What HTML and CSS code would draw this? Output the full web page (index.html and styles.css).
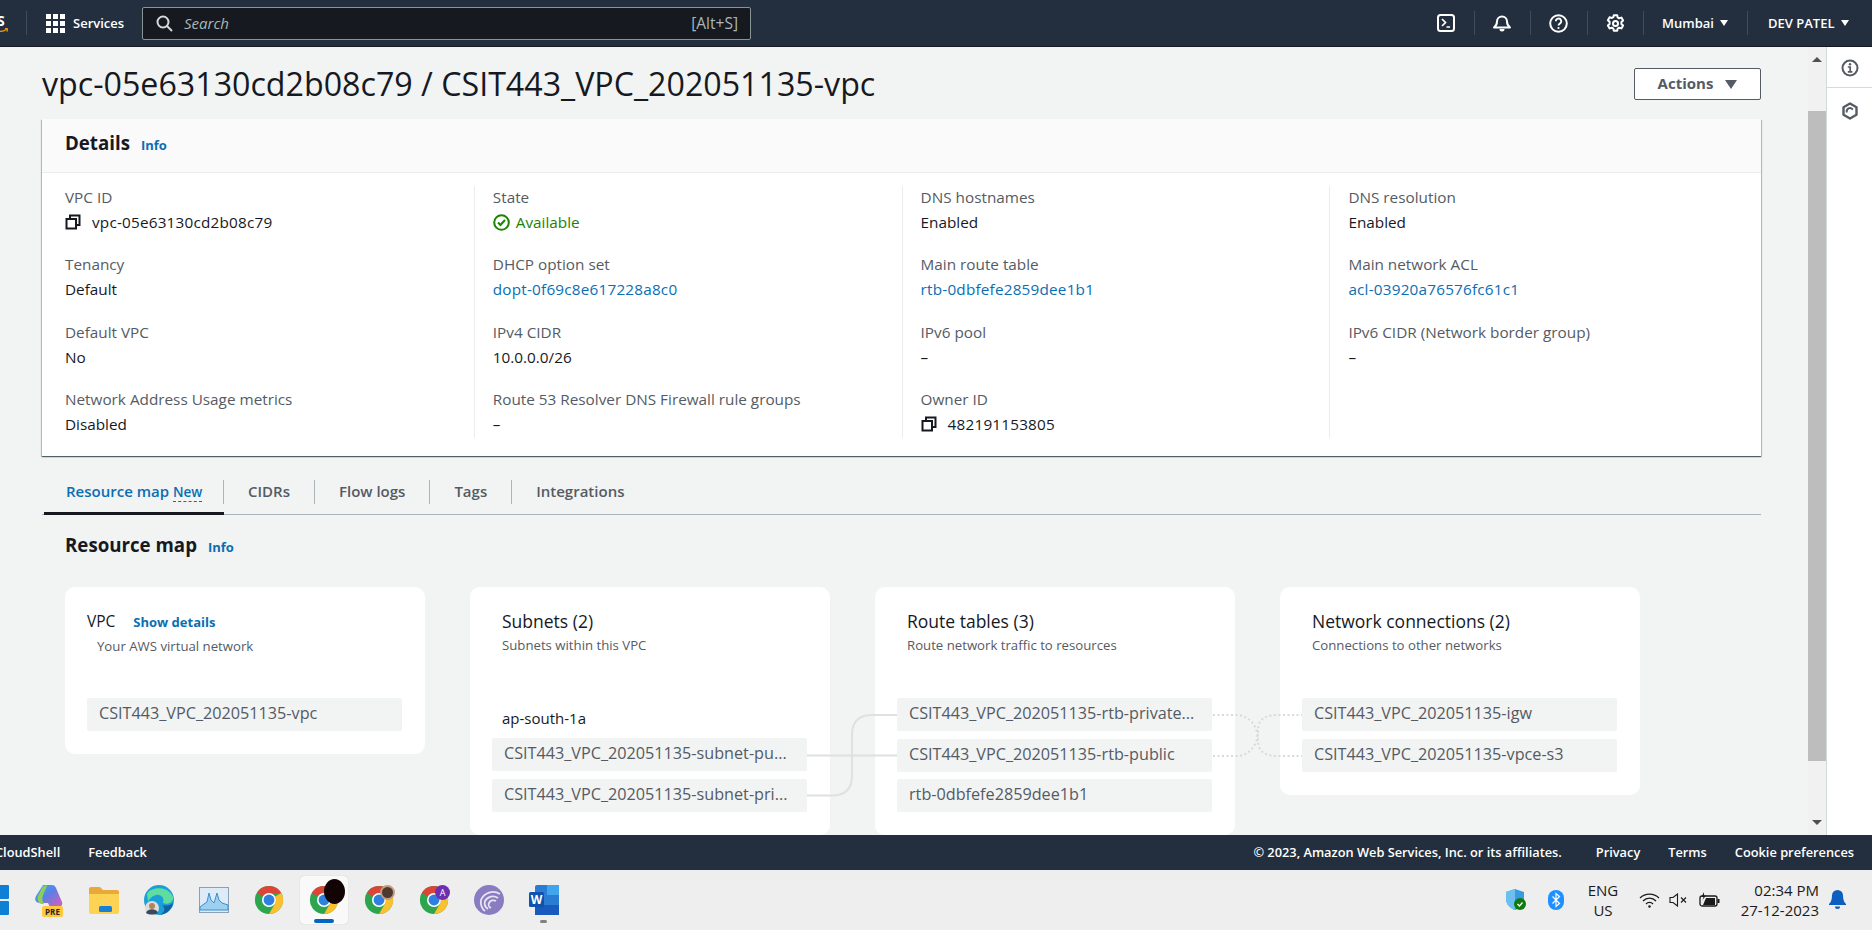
FILE: index.html
```html
<!DOCTYPE html>
<html lang="en">
<head>
  <meta charset="UTF-8">
  <title>VPC resource map</title>
  <link rel="stylesheet" href="styles.css">
</head>
<body>
  <svg class="defs" width="0" height="0">
    <symbol id="copy" viewBox="0 0 16 16">
      <path d="M1.5 5h9.5v9.5H1.5z" fill="none" stroke="#16191f" stroke-width="2"/>
      <path d="M5 4.5V1.5h9.5V11H11.5" fill="none" stroke="#16191f" stroke-width="2"/>
    </symbol>
    <symbol id="chrome" viewBox="0 0 32 32">
      <circle cx="16" cy="16" r="15" fill="#2da44e"/>
      <path d="M16 1a15 15 0 0 1 13 7.5H16a7.5 7.5 0 0 0-6.5 3.750L3 8.500A15 15 0 0 1 16 1z" fill="#db4437"/>
      <path d="M29 8.500A15 15 0 0 1 16 31l6.500-11.250A7.500 7.500 0 0 0 22.500 12.250z" fill="#fbc02d"/>
      <circle cx="16" cy="16" r="7.500" fill="#fff"/>
      <circle cx="16" cy="16" r="5.800" fill="#2f7fe0"/>
    </symbol>
  </svg>

  <header class="topbar">
    <div class="logo-crop">
      <span class="logo-s">S</span>
      <svg class="logo-smile" width="8" height="6" viewBox="0 0 8 6"><path d="M-6 1c4 3 9 3 13 0M5 .5l2.500.2-.5 3" fill="none" stroke="#f90" stroke-width="1.200"/></svg>
    </div>
    <span class="bar-sep logo-sep"></span>
    <svg class="grid-icon" width="19" height="19" viewBox="0 0 19 19" fill="#fff">
      <rect width="5" height="5"/><rect x="7" width="5" height="5"/><rect x="14" width="5" height="5"/>
      <rect y="7" width="5" height="5"/><rect x="7" y="7" width="5" height="5"/><rect x="14" y="7" width="5" height="5"/>
      <rect y="14" width="5" height="5"/><rect x="7" y="14" width="5" height="5"/><rect x="14" y="14" width="5" height="5"/>
    </svg>
    <span class="services">Services</span>
    <div class="search">
      <svg width="17" height="17" viewBox="0 0 17 17"><circle cx="7" cy="7" r="5.500" fill="none" stroke="#d5dbdb" stroke-width="2"/><path d="M11 11l5 5" stroke="#d5dbdb" stroke-width="2"/></svg>
      <span class="search-text">Search</span>
      <span class="search-key">[Alt+S]</span>
    </div>
    <div class="bar-right">
      <div class="bar-icon">
        <svg width="18" height="18" viewBox="0 0 18 18" fill="none" stroke="#fff" stroke-width="2"><rect x="1" y="1" width="16" height="16" rx="2.500"/><path d="M5 5l3.500 3.500L5 12M9.500 13H13" stroke-width="1.700"/></svg>
      </div>
      <span class="bar-sep"></span>
      <div class="bar-icon">
        <svg width="20" height="20" viewBox="0 0 20 20" fill="none" stroke="#fff" stroke-width="2"><path d="M2 14.500c2-1.500 3-3 3-6a5 5 0 0 1 10 0c0 3 1 4.500 3 6z" stroke-linejoin="round"/><path d="M7.500 16a2.500 2.500 0 0 0 5 0z" fill="#fff" stroke="none"/></svg>
      </div>
      <span class="bar-sep"></span>
      <div class="bar-icon">
        <svg width="19" height="19" viewBox="0 0 19 19" fill="none" stroke="#fff" stroke-width="2"><circle cx="9.500" cy="9.500" r="8.300"/><path d="M6.800 7.300a2.700 2.700 0 1 1 4 2.300c-.9.500-1.300 1-1.300 2" stroke-width="1.800"/><circle cx="9.500" cy="14" r="1.100" fill="#fff" stroke="none"/></svg>
      </div>
      <span class="bar-sep"></span>
      <div class="bar-icon">
        <svg width="19" height="19" viewBox="0 0 19 19" fill="none" stroke="#fff" stroke-width="2"><path d="M7.800 1.200h3.400l.5 2.300 1.400.8 2.300-.7 1.700 2.900-1.700 1.600v1.800l1.700 1.600-1.700 2.900-2.300-.7-1.400.8-.5 2.300H7.800l-.5-2.300-1.400-.8-2.300.7-1.700-2.900 1.700-1.600V7.800L1.900 6.200l1.700-2.900 2.300.7 1.400-.8z" stroke-linejoin="round"/><circle cx="9.500" cy="9.500" r="2.500"/></svg>
      </div>
      <span class="bar-sep"></span>
      <div class="bar-menu region">Mumbai<i class="caret"></i></div>
      <span class="bar-sep"></span>
      <div class="bar-menu user">DEV PATEL<i class="caret"></i></div>
    </div>
  </header>

  <div class="main">
    <main class="content">
      <div class="page-head">
        <h1>vpc-05e63130cd2b08c79 / CSIT443_VPC_202051135-vpc</h1>
        <button class="actions">Actions<i class="caret-lg"></i></button>
      </div>

      <section class="details">
        <div class="details-head"><h2>Details</h2><a class="info">Info</a></div>
        <div class="details-grid">
          <div class="col">
            <div class="field"><label>VPC ID</label><p class="id"><svg class="copy"><use href="#copy"/></svg>vpc-05e63130cd2b08c79</p></div>
            <div class="field"><label>Tenancy</label><p>Default</p></div>
            <div class="field"><label>Default VPC</label><p>No</p></div>
            <div class="field"><label>Network Address Usage metrics</label><p>Disabled</p></div>
          </div>
          <div class="col">
            <div class="field"><label>State</label><p class="ok"><svg class="check" width="17" height="17" viewBox="0 0 17 17" fill="none" stroke="#1d8102" stroke-width="2"><circle cx="8.500" cy="8.500" r="7.300"/><path d="M5 8.500l2.500 2.500L12 6"/></svg>Available</p></div>
            <div class="field"><label>DHCP option set</label><p class="id"><a>dopt-0f69c8e617228a8c0</a></p></div>
            <div class="field"><label>IPv4 CIDR</label><p>10.0.0.0/26</p></div>
            <div class="field"><label>Route 53 Resolver DNS Firewall rule groups</label><p>–</p></div>
          </div>
          <div class="col">
            <div class="field"><label>DNS hostnames</label><p>Enabled</p></div>
            <div class="field"><label>Main route table</label><p class="id"><a>rtb-0dbfefe2859dee1b1</a></p></div>
            <div class="field"><label>IPv6 pool</label><p>–</p></div>
            <div class="field"><label>Owner ID</label><p class="id"><svg class="copy"><use href="#copy"/></svg>482191153805</p></div>
          </div>
          <div class="col">
            <div class="field"><label>DNS resolution</label><p>Enabled</p></div>
            <div class="field"><label>Main network ACL</label><p class="id"><a>acl-03920a76576fc61c1</a></p></div>
            <div class="field"><label>IPv6 CIDR (Network border group)</label><p>–</p></div>
          </div>
        </div>
      </section>

      <nav class="tabs">
        <div class="tab active">Resource map <span class="new">New</span></div>
        <div class="tab">CIDRs</div>
        <span class="tab-sep"></span>
        <div class="tab">Flow logs</div>
        <span class="tab-sep"></span>
        <div class="tab">Tags</div>
        <span class="tab-sep"></span>
        <div class="tab">Integrations</div>
      </nav>

      <div class="map-title"><h2>Resource map</h2><a class="info">Info</a></div>

      <div class="map">
        <div class="map-card">
          <div class="map-head">
            <div class="map-name">VPC <a class="show">Show details</a></div>
            <div class="map-sub">Your AWS virtual network</div>
          </div>
          <div class="items"><div class="item">CSIT443_VPC_202051135-vpc</div></div>
        </div>

        <div class="map-card">
          <div class="map-head">
            <div class="map-name">Subnets (2)</div>
            <div class="map-sub">Subnets within this VPC</div>
          </div>
          <div class="zone">ap-south-1a</div>
          <div class="items">
            <div class="item">CSIT443_VPC_202051135-subnet-pu...</div>
            <div class="item">CSIT443_VPC_202051135-subnet-pri...</div>
          </div>
        </div>

        <div class="map-card">
          <div class="map-head">
            <div class="map-name">Route tables (3)</div>
            <div class="map-sub">Route network traffic to resources</div>
          </div>
          <div class="items">
            <div class="item">CSIT443_VPC_202051135-rtb-private...</div>
            <div class="item">CSIT443_VPC_202051135-rtb-public</div>
            <div class="item">rtb-0dbfefe2859dee1b1</div>
          </div>
        </div>

        <div class="map-card">
          <div class="map-head">
            <div class="map-name">Network connections (2)</div>
            <div class="map-sub">Connections to other networks</div>
          </div>
          <div class="items">
            <div class="item">CSIT443_VPC_202051135-igw</div>
            <div class="item">CSIT443_VPC_202051135-vpce-s3</div>
          </div>
        </div>

        <!-- map origin is x=42 y=587 -->
        <svg class="links" width="1300" height="250" viewBox="42 587 1300 250" fill="none">
          <g stroke="#dde1e2" stroke-width="2">
            <path d="M807 755.500H897"/>
            <path d="M807 795.500H832q20 0 20-20V735q0-20 20-20H897"/>
          </g>
          <g stroke="#d5dbdb" stroke-width="2" stroke-dasharray="2 2.500">
            <path d="M1213 715H1236c14 0 22 12 22 25s8 16 22 16H1302"/>
            <path d="M1213 756H1236c14 0 22-12 22-25s8-16 22-16H1302"/>
          </g>
        </svg>
      </div>
    </main>

    <div class="scrollbar">
      <i class="arrow-up"></i>
      <div class="thumb"></div>
      <i class="arrow-down"></i>
    </div>

    <aside class="side">
      <div class="side-btn first">
        <svg width="18" height="18" viewBox="0 0 18 18" fill="none" stroke="#545b64" stroke-width="2"><circle cx="9" cy="9" r="7.500"/><path d="M6.800 8h2.400v4.500M6.800 12.800h4.600" stroke-width="1.700"/><circle cx="9" cy="5.200" r="1.200" fill="#545b64" stroke="none"/></svg>
      </div>
      <div class="side-btn">
        <svg width="18" height="18" viewBox="0 0 18 18" fill="none" stroke="#545b64" stroke-width="2.400"><path d="M9 1.500l6.500 3.700v7.600L9 16.500l-6.500-3.700V5.200z" stroke-linejoin="round"/><path d="M5.800 10.500A3.500 3.500 0 0 1 9.500 6l2.500 1.500" stroke-width="2"/></svg>
      </div>
    </aside>
  </div>

  <footer class="footer">
    <div class="foot-left"><span>CloudShell</span><span>Feedback</span></div>
    <div class="foot-right">
      <span class="copyright">© 2023, Amazon Web Services, Inc. or its affiliates.</span>
      <span>Privacy</span><span>Terms</span><span>Cookie preferences</span>
    </div>
  </footer>

  <div class="taskbar">
    <div class="apps">
      <div class="app start">
        <svg width="30" height="30" viewBox="0 0 30 30" fill="#0f7fd6"><rect width="14" height="14" rx="1"/><rect x="16" width="14" height="14" rx="1"/><rect y="16" width="14" height="14" rx="1"/><rect x="16" y="16" width="14" height="14" rx="1"/></svg>
      </div>
      <div class="app">
        <svg width="30" height="34" viewBox="0 0 30 34">
          <defs><linearGradient id="cp" x1="0" y1="0" x2="1" y2="1"><stop offset="0" stop-color="#31b6e8"/><stop offset=".45" stop-color="#5a7fe8"/><stop offset="1" stop-color="#e25bb5"/></linearGradient></defs>
          <path d="M9 2h9c2 0 3 1 4 3l6 14c1 3-1 5-4 5h-8l-2-4H6C2 20 0 17 2 13z" fill="url(#cp)"/>
          <path d="M4 13l4-8c1-2 3-3 5-2l-4 9c-1 3-1 6 1 9H7c-3-1-4-5-3-8z" fill="#8fce5a"/>
          <rect x="8" y="23" width="21" height="11" rx="2" fill="#ffc83d"/>
          <text x="18.500" y="32" class="pre">PRE</text>
        </svg>
      </div>
      <div class="app">
        <svg width="30" height="28" viewBox="0 0 30 28"><path d="M0 3a2 2 0 0 1 2-2h9l3 3h14a2 2 0 0 1 2 2v2H0z" fill="#e8a93a"/><path d="M0 8h30v18a2 2 0 0 1-2 2H2a2 2 0 0 1-2-2z" fill="#fcd353"/><rect x="10" y="20" width="13" height="6" rx="1.500" fill="#1b80d4"/></svg>
      </div>
      <div class="app">
        <svg width="30" height="30" viewBox="0 0 30 30">
          <circle cx="15" cy="15" r="15" fill="#1a9fd8"/>
          <path d="M3 9C6 2 24 0 29 12c1 6-6 8-10 6 2-5-2-9-7-8-4 1-7 4-8 7z" fill="#5fdca0"/>
          <path d="M29 18c-1 7-8 12-14 12 2 0 9-5 3-10 3 1 8 1 11-2z" fill="#12619e"/>
          <circle cx="8" cy="23" r="7" fill="#ddd"/>
          <circle cx="8" cy="21" r="3" fill="#b5835a"/>
          <path d="M2 28c1-5 11-5 12 0-3 2-9 2-12 0z" fill="#3a4a5e"/>
        </svg>
      </div>
      <div class="app">
        <svg width="30" height="26" viewBox="0 0 30 26"><rect x=".5" y=".5" width="29" height="25" fill="#dcebf7" stroke="#8aa0b4"/><path d="M1 23V20l4-3 3-2 2-9 2 7 3 3 3-10 2 7 3 3 6 2v5z" fill="#9ccff0" stroke="#3a8fd0"/></svg>
      </div>
      <div class="app"><svg width="30" height="30"><use href="#chrome"/></svg></div>
      <div class="app active-app">
        <svg width="30" height="30"><use href="#chrome"/></svg>
        <i class="blot"></i>
        <i class="run-bar"></i>
      </div>
      <div class="app">
        <svg width="30" height="30"><use href="#chrome"/></svg>
        <i class="face"></i>
      </div>
      <div class="app">
        <svg width="30" height="30"><use href="#chrome"/></svg>
        <i class="badge-a">A</i>
      </div>
      <div class="app">
        <svg width="30" height="30" viewBox="0 0 30 30" fill="none"><circle cx="15" cy="15" r="15" fill="#8a7cc0"/><path d="M26 9a13 13 0 0 0-19 6c-1 4 1 9 4 11M24 13a9 9 0 0 0-13 3c-1 3 0 6 3 8M22 16a5 5 0 0 0-7 2c-1 2 0 4 2 5" stroke="#e8e4f4" stroke-width="1.800"/></svg>
      </div>
      <div class="app">
        <svg width="30" height="32" viewBox="0 0 30 32"><rect x="6" y="1" width="24" height="30" rx="2" fill="#2b7cd3"/><rect x="18" y="1" width="12" height="10" fill="#41a5ee"/><rect x="6" y="21" width="24" height="10" fill="#185abd"/><rect y="8" width="15" height="15" rx="1.500" fill="#1152ad"/><text x="7.500" y="20" class="word">W</text></svg>
        <i class="run-dot"></i>
      </div>
    </div>

    <div class="tray">
      <svg class="tray-shield" width="20" height="22" viewBox="0 0 20 22"><path d="M9 0l9 3v7c0 5-4 9-9 11-5-2-9-6-9-11V3z" fill="#3b9be0"/><path d="M0 3l9-3v21c-5-2-9-6-9-11z" fill="#6cc0f0"/><circle cx="14" cy="15" r="6" fill="#0f7b0f"/><path d="M11.500 15l2 2 3-3.500" fill="none" stroke="#fff" stroke-width="1.300"/></svg>
      <svg class="tray-bt" width="16" height="20" viewBox="0 0 16 20"><rect width="16" height="20" rx="8" fill="#1e90ff"/><path d="M4.500 6.500l7 7L8 16.500V3.500l3.500 3-7 7" fill="none" stroke="#fff" stroke-width="1.200"/></svg>
      <div class="lang">ENG<br>US</div>
      <svg class="tray-wifi" width="21" height="15" viewBox="0 0 21 15" fill="none" stroke="#1a1a1a" stroke-width="1.200"><path d="M1 5a13.500 13.500 0 0 1 19 0M4 8a9 9 0 0 1 13 0M7 11a4.500 4.500 0 0 1 7 0"/><circle cx="10.500" cy="13.500" r="1.200" fill="#1a1a1a" stroke="none"/></svg>
      <svg class="tray-sound" width="20" height="14" viewBox="0 0 20 14" fill="none" stroke="#1a1a1a" stroke-width="1.100"><path d="M1 4.500h3L8.500 1v12L4 9.500H1z"/><path d="M12 4.500l5 5M17 4.500l-5 5"/></svg>
      <svg class="tray-batt" width="21" height="16" viewBox="0 0 21 16" fill="#1a1a1a"><rect x="1" y="4" width="17" height="10" rx="2" fill="none" stroke="#1a1a1a" stroke-width="1.300"/><path d="M4 13l3-7h9v7z"/><rect x="18.500" y="7" width="2" height="4"/><path d="M5 0L2.500 5h2L3.500 8 7 3.500H5z"/></svg>
      <div class="clock">02:34 PM<br>27-12-2023</div>
      <svg class="tray-bell" width="17" height="20" viewBox="0 0 17 20" fill="#0c5fc0"><path d="M8.500 0a5.500 5.500 0 0 1 5.500 5.500c0 4 1 6.500 3 8.500v1H0v-1c2-2 3-4.500 3-8.500A5.500 5.500 0 0 1 8.500 0z"/><path d="M6 16.500h5a2.500 2.500 0 0 1-5 0z"/></svg>
    </div>
  </div>
</body>
</html>
```

FILE: styles.css
```css
* {
  box-sizing: border-box;
}

body {
  margin: 0;
  width: 1872px;
  height: 930px;
  overflow: hidden;
  font-family: "Open Sans", Roboto, sans-serif;
  font-size: 15.300px;
  color: #16191f;
  background-color: #f2f3f3;
}

h1, h2, p {
  margin: 0;
  font-weight: normal;
}

a {
  color: #0a6eb4;
}

.defs {
  position: absolute;
}

/* top bar */
.topbar {
  height: 47px;
  background-color: #232f3e;
  border-bottom: 1px solid #16191f;
  display: flex;
  align-items: center;
  color: #fff;
}

.logo-crop {
  width: 26px;
  position: relative;
  height: 30px;
}

.logo-s {
  position: absolute;
  left: -3px;
  top: 3px;
  font-size: 14px;
  font-weight: 700;
}

.logo-smile {
  position: absolute;
  left: 0;
  top: 20px;
}

.bar-sep {
  width: 1px;
  height: 24px;
  background-color: #414d5c;
  flex: none;
}

.grid-icon {
  margin-left: 19px;
}

.services {
  margin-left: 8px;
  font-size: 13px;
  font-weight: 600;
  width: 69px;
}

.search {
  width: 609px;
  height: 33px;
  background-color: #16191f;
  border: 1px solid #879596;
  border-radius: 2px;
  display: flex;
  align-items: center;
  padding: 0 12px 0 13px;
}

.search-text {
  margin-left: 11px;
  font-style: italic;
  color: #aab7b8;
  font-size: 15px;
}

.search-key {
  margin-left: auto;
  color: #aab7b8;
  font-size: 15.500px;
}

.bar-right {
  margin-left: auto;
  display: flex;
  align-items: center;
}

.bar-icon {
  width: 55.500px;
  display: flex;
  justify-content: center;
}

.bar-menu {
  display: flex;
  align-items: center;
  font-size: 13px;
  font-weight: 600;
}

.region {
  padding: 0 14px 0 18px;
  width: 103px;
}

.user {
  padding-left: 20px;
  width: 124px;
}

.caret {
  margin-left: 6px;
  border-left: 4.500px solid transparent;
  border-right: 4.500px solid transparent;
  border-top: 6px solid #fff;
}

/* page area */
.main {
  height: 788px;
  display: flex;
  overflow: hidden;
}

.content {
  width: 1808px;
  flex: none;
  padding: 0 47px 0 42px;
}

.page-head {
  height: 72px;
  display: flex;
  align-items: center;
  justify-content: space-between;
  padding-top: 2px;
}

h1 {
  font-size: 32.200px;
  line-height: 36px;
  margin-top: -1px;
}

.actions {
  width: 127px;
  height: 32px;
  background-color: #fff;
  border: 1px solid #545b64;
  border-radius: 2px;
  color: #545b64;
  font: 700 15px "Open Sans", sans-serif;
  padding: 0 0 2px;
}

.caret-lg {
  display: inline-block;
  margin-left: 12px;
  border-left: 6px solid transparent;
  border-right: 6px solid transparent;
  border-top: 9px solid #545b64;
}

.details {
  height: 337px;
  background-color: #fff;
  box-shadow: 0 1px 1px 0 rgba(0, 28, 36, 0.5), 1px 1px 1px 0 rgba(0, 28, 36, 0.2), -1px 1px 1px 0 rgba(0, 28, 36, 0.2);
}

.details-head {
  height: 54px;
  background-color: #fafafa;
  border-bottom: 1px solid #eaeded;
  padding: 0 0 5px 23px;
  display: flex;
  align-items: center;
  gap: 11px;
}

.details-head h2,
.map-title h2 {
  font-size: 18.700px;
  font-weight: 700;
  line-height: 24px;
}

.info {
  font-size: 13px;
  font-weight: 700;
  padding-top: 3px;
}

.details-grid {
  display: grid;
  grid-template-columns: repeat(4, 427.800px);
  margin-top: 13px;
  padding-left: 4px;
}

.col {
  height: 252px;
  padding-left: 18px;
  border-left: 1px solid #eaeded;
}

.col:first-child {
  border-left: none;
  padding-left: 19px;
}

.field {
  height: 67.300px;
}

.field label {
  display: block;
  color: #545b64;
  line-height: 22px;
  padding-bottom: 2px;
}

.field p {
  line-height: 24px;
  display: flex;
  align-items: center;
}

.field .id {
  letter-spacing: 0.200px;
}

.copy {
  width: 16px;
  height: 16px;
  margin-right: 11px;
}

.ok {
  color: #1d8102;
}

.check {
  margin-right: 6px;
}

/* tabs */
.tabs {
  margin-top: 24px;
  height: 35px;
  border-bottom: 1px solid #aab7b8;
  display: flex;
  align-items: flex-start;
  padding-left: 2px;
}

.tab {
  height: 24px;
  padding: 0 24px;
  line-height: 23px;
  font-weight: 600;
  color: #545b64;
  font-size: 15px;
}

.tab.active {
  width: 180px;
  height: 35px;
  padding-left: 22px;
  padding-right: 0;
  color: #0a6eb4;
  border-bottom: 3px solid #16191f;
  border-right: 0;
  margin-bottom: -1px;
  position: relative;
}

.tab.active::after {
  content: "";
  position: absolute;
  right: 0;
  top: 0;
  width: 1px;
  height: 24px;
  background-color: #aab7b8;
}

.new {
  font-size: 13.500px;
  border-bottom: 1px dashed #0a6eb4;
}

.tab-sep {
  width: 1px;
  height: 24px;
  background-color: #aab7b8;
}

.map-title {
  margin-top: 18px;
  padding-left: 23px;
  display: flex;
  align-items: center;
  gap: 11px;
}

/* resource map */
.map {
  position: relative;
  margin-top: 30px;
  padding-left: 23px;
  display: flex;
  align-items: flex-start;
  gap: 45px;
}

.map-card {
  width: 360px;
  background-color: #fff;
  border-radius: 10px;
  padding: 22px 23px 23px 22px;
}

.map-head {
  height: 89px;
}

.map-name {
  font-size: 17.500px;
  line-height: 24px;
  padding-left: 10px;
}

.map-card:first-child .map-name {
  padding-left: 0;
  font-size: 15.500px;
}

.show {
  margin-left: 14px;
  font-size: 13px;
  font-weight: 700;
}

.map-sub {
  margin-top: 2px;
  padding-left: 10px;
  color: #545b64;
  font-size: 13.200px;
  line-height: 20px;
}

.zone {
  height: 40px;
  padding: 9px 0 0 10px;
  line-height: 22px;
  font-size: 15px;
}

.items {
  display: flex;
  flex-direction: column;
  gap: 7.500px;
}

.item {
  height: 33px;
  background-color: #f2f3f3;
  border-radius: 2px;
  padding: 0 0 0 12px;
  line-height: 31px;
  font-size: 16.200px;
  color: #545b64;
  white-space: nowrap;
}

.links {
  position: absolute;
  left: 0;
  top: 0;
}

/* scrollbar + side panel */
.scrollbar {
  width: 18px;
  flex: none;
  background-color: #f1f1f1;
  position: relative;
}

.thumb {
  position: absolute;
  top: 64px;
  left: 0;
  width: 18px;
  height: 650px;
  background-color: #bdbdbd;
}

.arrow-up {
  position: absolute;
  top: 10px;
  left: 4px;
  border-left: 5px solid transparent;
  border-right: 5px solid transparent;
  border-bottom: 5px solid #505050;
}

.arrow-down {
  position: absolute;
  bottom: 10px;
  left: 4px;
  border-left: 5px solid transparent;
  border-right: 5px solid transparent;
  border-top: 5px solid #505050;
}

.side {
  width: 46px;
  flex: none;
  background-color: #fff;
  border-left: 1px solid #d5dbdb;
}

.side-btn {
  height: 41px;
  display: flex;
  align-items: center;
  justify-content: center;
  padding-top: 1px;
}

.side-btn.first {
  border-bottom: 1px solid #d5dbdb;
}

.side-btn:last-child {
  height: 44px;
}

/* console footer */
.footer {
  height: 35px;
  background-color: #232f3e;
  color: #fff;
  display: flex;
  justify-content: space-between;
  align-items: center;
  font-size: 12.800px;
  font-weight: 600;
  padding-bottom: 2px;
}

.foot-left {
  display: flex;
  gap: 28px;
  margin-left: -5px;
}

.foot-right {
  display: flex;
  gap: 28px;
  padding-right: 18px;
}

.copyright {
  margin-right: 6px;
}

/* windows taskbar */
.taskbar {
  height: 60px;
  background-color: #eeeeee;
  display: flex;
  align-items: center;
  justify-content: space-between;
}

.apps {
  display: flex;
  align-items: center;
  margin-left: -30px;
  gap: 7px;
}

.app {
  width: 48px;
  height: 48px;
  display: flex;
  align-items: center;
  justify-content: center;
  position: relative;
}

.active-app {
  background-color: #f9f9f9;
  border-radius: 4px;
  box-shadow: 0 0 1px rgba(0, 0, 0, 0.2);
}

.run-bar {
  position: absolute;
  bottom: 1px;
  left: 14px;
  width: 20px;
  height: 4px;
  border-radius: 2px;
  background-color: #0067c0;
}

.run-dot {
  position: absolute;
  bottom: 1px;
  left: 20px;
  width: 7px;
  height: 3px;
  border-radius: 2px;
  background-color: #808080;
}

.blot {
  position: absolute;
  left: 24px;
  top: 3px;
  width: 21px;
  height: 25px;
  border-radius: 50%;
  background-color: #120404;
}

.face {
  position: absolute;
  left: 25px;
  top: 9px;
  width: 15px;
  height: 15px;
  border-radius: 50%;
  background-color: #4a3a30;
  border: 2px solid #c59a7d;
}

.badge-a {
  position: absolute;
  left: 25px;
  top: 9px;
  width: 15px;
  height: 15px;
  border-radius: 50%;
  background-color: #6b2fb0;
  color: #fff;
  font-size: 9px;
  font-style: normal;
  line-height: 15px;
  text-align: center;
}

.pre {
  font: 700 8px "Open Sans", sans-serif;
  text-anchor: middle;
  fill: #222;
}

.word {
  font: 700 12px "Open Sans", sans-serif;
  text-anchor: middle;
  fill: #fff;
}

.tray {
  display: flex;
  align-items: center;
  color: #1a1a1a;
  font-size: 15px;
  line-height: 20px;
  padding-right: 26px;
}

.lang {
  margin-left: 19px;
  width: 40px;
  text-align: center;
}

.tray-bt {
  margin-left: 22px;
}

.tray-wifi {
  margin-left: 16px;
}

.tray-sound {
  margin-left: 9px;
}

.tray-batt {
  margin-left: 10px;
}

.clock {
  margin-left: 11px;
  width: 88px;
  text-align: right;
}

.tray-bell {
  margin-left: 10px;
}
```
